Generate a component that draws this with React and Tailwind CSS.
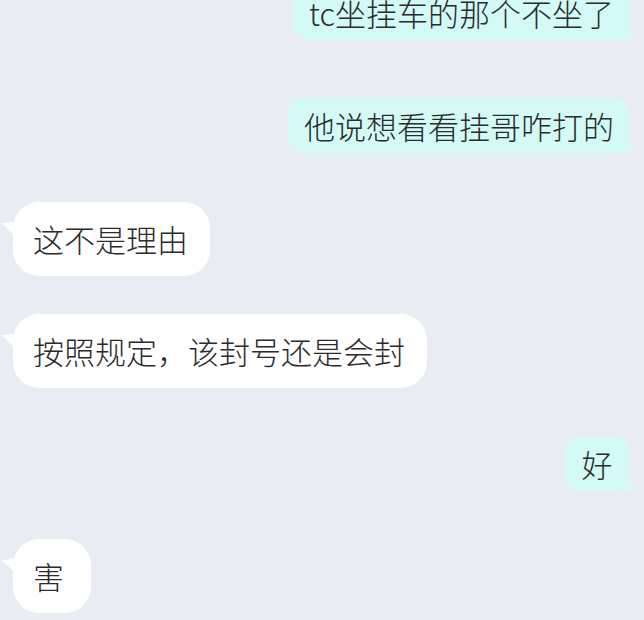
import React from 'react';

const messages = [
    { side: 'right', text: 'tc坐挂车的那个不坐了', gap: '' },
    { side: 'right', text: '他说想看看挂哥咋打的', gap: 'mt-[58px]' },
    { side: 'left', text: '这不是理由', gap: 'mt-[49px]' },
    { side: 'left', text: '按照规定，该封号还是会封', gap: 'mt-[38px]' },
    { side: 'right', text: '好', gap: 'mt-[48px]' },
    { side: 'left', text: '害', gap: 'mt-[48px]' },
];

const RightBubble = ({ text }) => (
    <div className="relative self-end">
        <div className="min-w-[66px] rounded-[16px] bg-[#d4faf8] px-[16px] py-[12px] text-center text-[31px] leading-[31px] whitespace-nowrap">
            {text}
        </div>
        {/* small tail at the bottom right corner */}
        <svg className="absolute right-[-5px] bottom-0" width="12" height="12" viewBox="0 0 12 12">
            <path d="M0 0 L7 0 Q7 6 9 8 Q11 10 9 11.5 Q6 12.5 0 12 Z" fill="#d4faf8" />
        </svg>
    </div>
);

const LeftBubble = ({ text }) => (
    <div className="relative self-start">
        <div className="min-w-[78px] rounded-[26px] bg-white pl-[20px] pr-[22px] py-[21px] text-[31px] leading-[32px] whitespace-nowrap">
            {text}
        </div>
        {/* tail pointing up and left */}
        <svg className="absolute left-[-12px] top-[18px]" width="16" height="20" viewBox="0 0 16 20">
            <path d="M16 0 L16 18 Q12 14 8 10 Q4 6 1 4 Q0 3 2 3 Q8 3 16 0 Z" fill="#ffffff" />
        </svg>
    </div>
);

export default function App() {
    return (
        <div className="h-[620px] w-[644px] overflow-hidden bg-[#eaecf4] font-['Noto_Sans_CJK_SC',sans-serif] font-light text-[#2b2b2b]">
            <div className="-mt-[15px] flex flex-col pl-[13px] pr-[14px]">
                {messages.map((m, i) => (
                    <div key={i} className={`flex flex-col ${m.gap}`}>
                        {m.side === 'right' ? <RightBubble text={m.text} /> : <LeftBubble text={m.text} />}
                    </div>
                ))}
            </div>
        </div>
    );
}
